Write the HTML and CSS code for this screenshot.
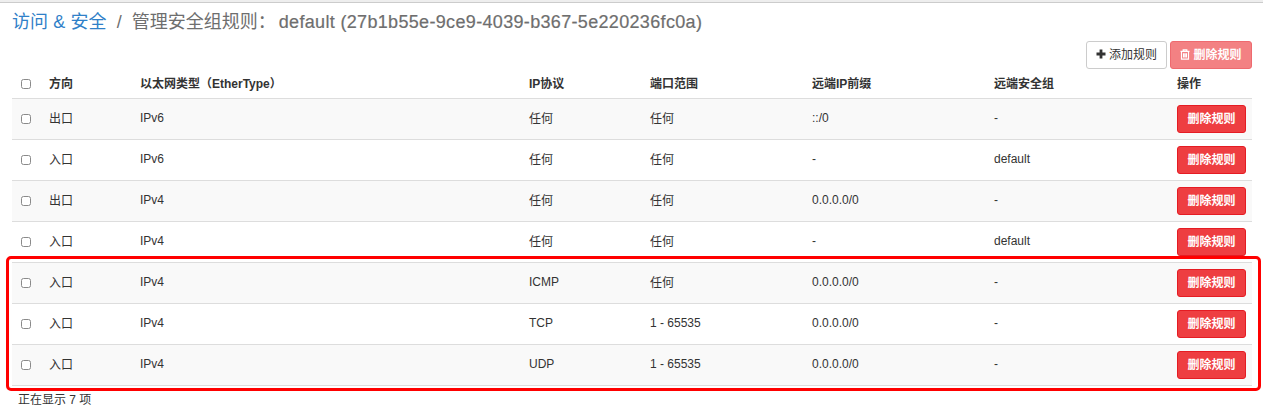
FILE: index.html
```html
<!DOCTYPE html>
<html lang="zh-CN">
<head>
<meta charset="utf-8">
<title>管理安全组规则</title>
<link rel="stylesheet" href="styles.css">
</head>
<body>
<div class="topbar"></div>
<main class="page">
  <h1 class="title"><a class="crumb" href="#">访问 &amp; 安全</a><span class="slash">/</span><span>管理安全组规则：</span><span class="group">default (27b1b55e-9ce9-4039-b367-5e220236fc0a)</span></h1>
  <div class="actions">
    <button class="btn add"><svg class="plus" viewBox="0 0 10 10"><path d="M3.6 0.5h2.8v3.1h3.1v2.8H6.4v3.1H3.6V6.4H0.5V3.6h3.1z"/></svg>添加规则</button>
    <button class="btn danger disabled"><svg class="trash" viewBox="0 0 10 11"><path d="M3.2 1.8V.8h3.6v1M.5 2.3h9M1.5 2.5v7.7h7V2.5M3.6 4.2v4.4M5 4.2v4.4M6.4 4.2v4.4"/></svg>删除规则</button>
  </div>
  <section class="table">
    <div class="row head"><span class="check"><input type="checkbox"></span><span>方向</span><span>以太网类型（EtherType）</span><span>IP协议</span><span>端口范围</span><span>远端IP前缀</span><span>远端安全组</span><span>操作</span></div>
    <div class="row odd"><span class="check"><input type="checkbox"></span><span class="cjk">出口</span><span>IPv6</span><span class="cjk">任何</span><span class="cjk">任何</span><span>::/0</span><span>-</span><button class="btn danger">删除规则</button></div>
    <div class="row"><span class="check"><input type="checkbox"></span><span class="cjk">入口</span><span>IPv6</span><span class="cjk">任何</span><span class="cjk">任何</span><span>-</span><span>default</span><button class="btn danger">删除规则</button></div>
    <div class="row odd"><span class="check"><input type="checkbox"></span><span class="cjk">出口</span><span>IPv4</span><span class="cjk">任何</span><span class="cjk">任何</span><span>0.0.0.0/0</span><span>-</span><button class="btn danger">删除规则</button></div>
    <div class="row"><span class="check"><input type="checkbox"></span><span class="cjk">入口</span><span>IPv4</span><span class="cjk">任何</span><span class="cjk">任何</span><span>-</span><span>default</span><button class="btn danger">删除规则</button></div>
    <div class="row odd"><span class="check"><input type="checkbox"></span><span class="cjk">入口</span><span>IPv4</span><span>ICMP</span><span class="cjk">任何</span><span>0.0.0.0/0</span><span>-</span><button class="btn danger">删除规则</button></div>
    <div class="row"><span class="check"><input type="checkbox"></span><span class="cjk">入口</span><span>IPv4</span><span>TCP</span><span>1 - 65535</span><span>0.0.0.0/0</span><span>-</span><button class="btn danger">删除规则</button></div>
    <div class="row odd"><span class="check"><input type="checkbox"></span><span class="cjk">入口</span><span>IPv4</span><span>UDP</span><span>1 - 65535</span><span>0.0.0.0/0</span><span>-</span><button class="btn danger">删除规则</button></div>
    <div class="foot">正在显示 7 项</div>
  </section>
</main>
<div class="highlight"></div>
</body>
</html>
```
FILE: styles.css
```css
* { box-sizing: border-box; }
body {
  margin: 0;
  height: 420px;
  overflow: hidden;
  position: relative;
  background: #fff;
  color: #333;
  font: 12px/18px "Liberation Sans", "Noto Sans CJK SC", sans-serif;
}
.topbar { height: 3px; background: #eee; border-bottom: 1px solid #ccc; }
.page { padding: 0 11px 0 12px; }
.title {
  display: flex;
  margin: 0;
  height: 38px;
  padding-top: 6px;
  font-size: 18px;
  font-weight: 400;
  line-height: 26px;
  color: #6e6e6e;
  white-space: nowrap;
}
.crumb { color: #2f80c8; text-decoration: none; letter-spacing: .1px; }
.slash { width: 25px; text-align: center; }
.group { margin-left: 3px; letter-spacing: .33px; -webkit-text-stroke: .2px #6e6e6e; }
.actions { display: flex; justify-content: flex-end; gap: 3px; height: 28px; }
.btn {
  display: flex;
  align-items: center;
  justify-content: center;
  height: 28px;
  padding: 0;
  border: 1px solid #ccc;
  border-radius: 3px;
  background: #fff;
  color: #333;
  font: inherit;
  white-space: nowrap;
}
.add { width: 81px; }
.danger { width: 69px; background: #ee3e41; border-color: #e51c23; color: #fff; font-weight: 700; }
.disabled { width: 82px; opacity: .65; }
.plus { width: 10px; height: 10px; margin: 0 3px 2px 0; fill: #333; }
.trash { width: 10px; height: 11px; margin: 0 3px 1px 0; fill: none; stroke: #fff; stroke-width: 1.2; }
.row {
  display: grid;
  grid-template-columns: 37px 91px 389px 121px 162px 182px 183px 69px;
  height: 41px;
  padding-top: 6px;
  border-top: 1px solid #ddd;
}
.row > span { padding-top: 4px; white-space: nowrap; }
.row > .cjk { padding-top: 5px; }
.row.head { height: 29px; padding-top: 2px; border: 0; font-weight: 700; }
.odd { background: #f9f9f9; }
.row .check { padding: 9px 0 0 9px; }
.row.head .check { padding-top: 8px; }
input {
  display: block;
  appearance: none;
  width: 10px;
  height: 10px;
  margin: 0;
  border: 1px solid #8a8a8a;
  border-radius: 2.5px;
  background: #fff;
}
.foot { height: 30px; padding: 5px 0 0 6px; border-top: 1px solid #ddd; }
.highlight {
  position: absolute;
  left: 6px;
  top: 256px;
  width: 1255px;
  height: 135px;
  border: 3px solid #f00;
  border-radius: 5px;
}
```
